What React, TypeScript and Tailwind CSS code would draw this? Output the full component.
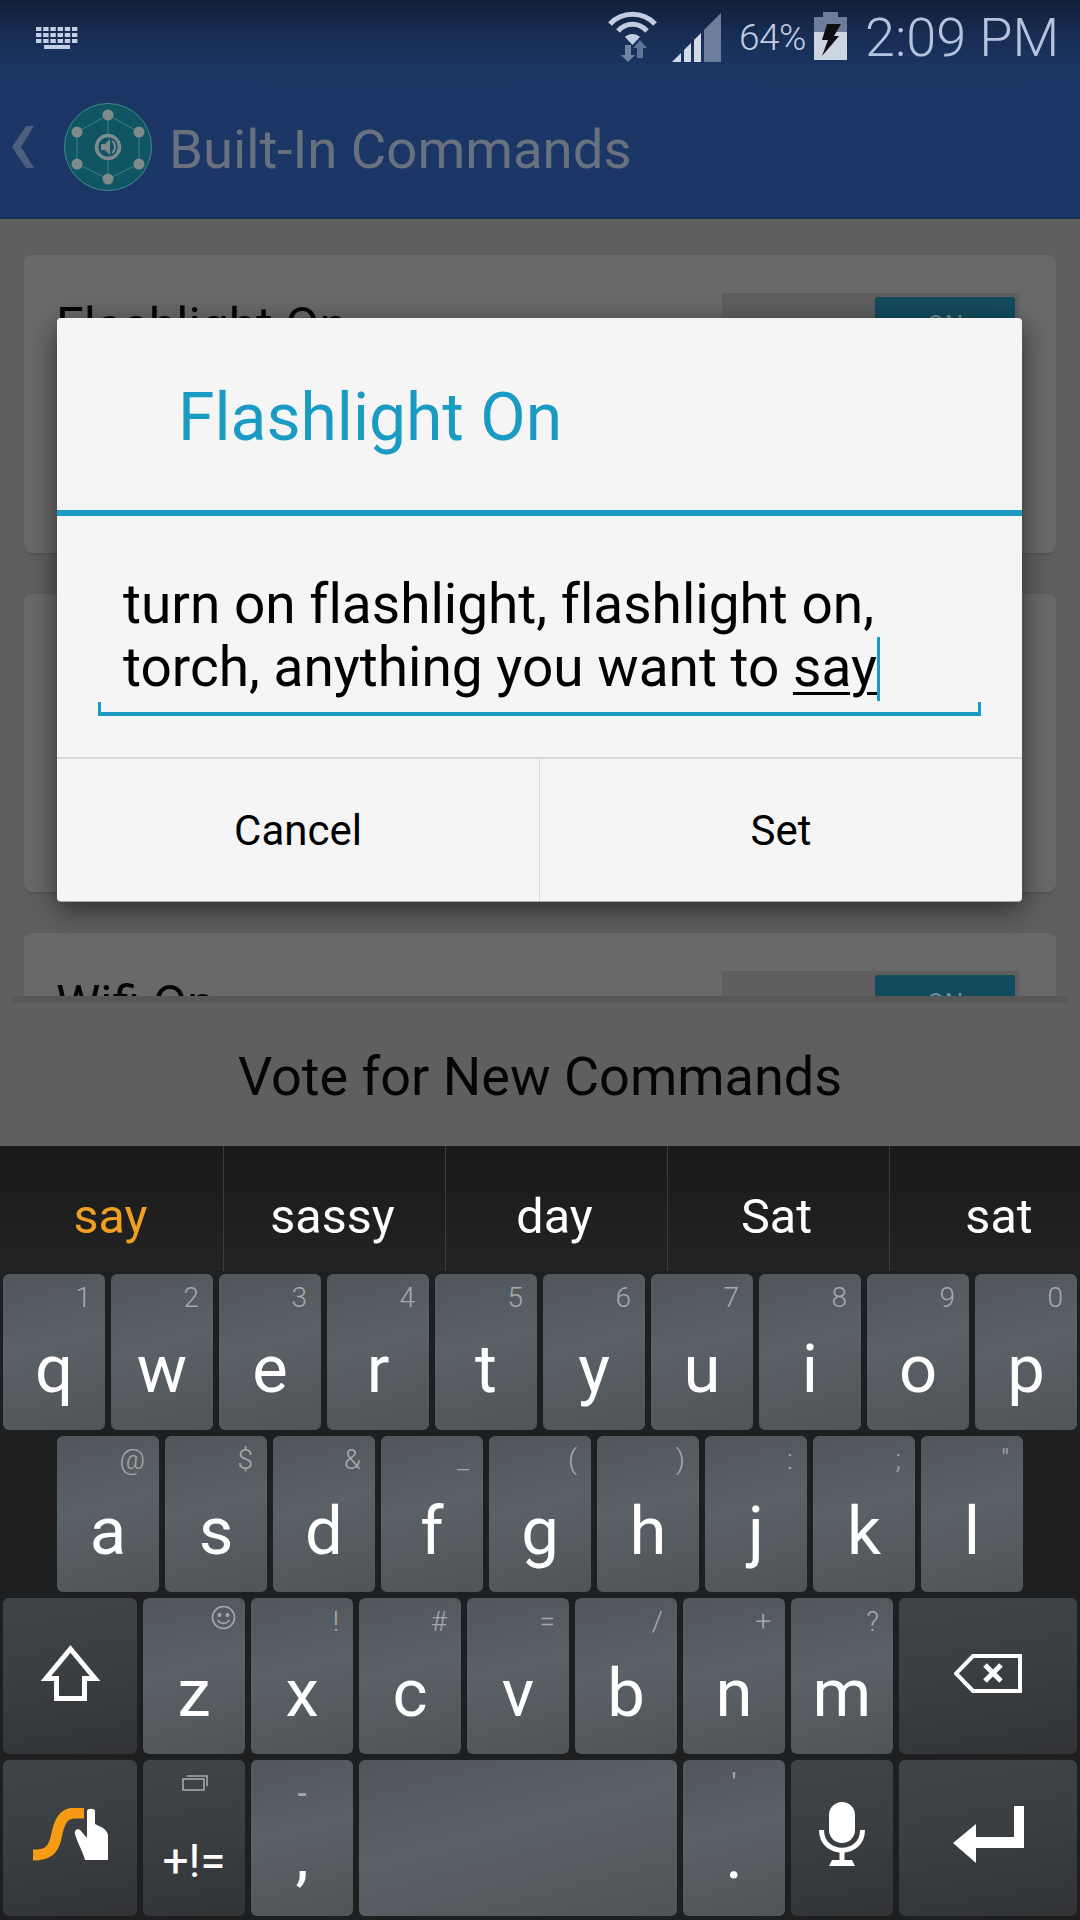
const digits = ["1", "2", "3", "4", "5", "6", "7", "8", "9", "0"];
const row1 = ["q", "w", "e", "r", "t", "y", "u", "i", "o", "p"];
const row2 = [
  { label: "a", hint: "@" },
  { label: "s", hint: "$" },
  { label: "d", hint: "&" },
  { label: "f", hint: "_" },
  { label: "g", hint: "(" },
  { label: "h", hint: ")" },
  { label: "j", hint: ":" },
  { label: "k", hint: ";" },
  { label: "l", hint: '"' },
];
const row3 = [
  { label: "x", hint: "!" },
  { label: "c", hint: "#" },
  { label: "v", hint: "=" },
  { label: "b", hint: "/" },
  { label: "n", hint: "+" },
  { label: "m", hint: "?" },
];
const suggestions = ["say", "sassy", "day", "Sat", "sat"];

const lightKey =
  "relative h-[156px] shrink-0 rounded-[6px] bg-[linear-gradient(165deg,#50565b_0%,#5a6167_45%,#505457_100%)] text-white";
const darkKey =
  "relative h-[156px] shrink-0 rounded-[6px] bg-[linear-gradient(170deg,#404448_0%,#3b3e41_50%,#313335_100%)] text-white flex items-center justify-center";
const keyLetter = "absolute inset-x-0 top-[60px] text-center text-[67px] leading-[70px]";

function LetterKey({ label, hint }: { label: string; hint?: string }) {
  return (
    <div className={`${lightKey} w-[102px]`}>
      {hint && (
        <span className="absolute right-[14px] top-[8px] text-[28px] leading-[32px] font-light text-[#a5a9ad]">
          {hint}
        </span>
      )}
      <span className={keyLetter}>{label}</span>
    </div>
  );
}

function Card({ title }: { title?: string }) {
  return (
    <div className="flex h-[298px] shrink-0 items-start justify-between rounded-[8px] bg-[#696969] pl-[32px] pr-[37px] pt-[38px] shadow-[0_2px_0_#565656]">
      {title && <span className="pt-[5px] text-[50px] leading-[56px] text-[#050505]">{title}</span>}
      {title && (
        <div className="h-[80px] w-[297px] bg-[#5f5f5f] p-[4px] pl-[153px]">
          <div className="flex h-full items-start justify-center rounded-[3px] bg-[#134b5e] pt-[9px] text-[26px] text-[#6f8d97]">
            ON
          </div>
        </div>
      )}
    </div>
  );
}

function WifiIcon() {
  return (
    <svg width="49" height="52" viewBox="0 0 49 52" fill="none">
      <path d="M2 14 C14 1 35 1 47 14" stroke="#c3cde0" strokeWidth="5" />
      <path d="M10 21 C18 12 31 12 39 21" stroke="#c3cde0" strokeWidth="5" />
      <path d="M17 27 C21 23 28 23 32 27 L24.5 35 Z" fill="#c3cde0" />
      <path d="M17 35 H23 V45 H27 L20 52 L13 45 H17 Z" fill="#6f82a0" />
      <path d="M32 30 L39 38 H35 V48 H29 V38 H25 Z" fill="#5f7596" />
    </svg>
  );
}

function SignalIcon() {
  return (
    <svg width="49" height="49" viewBox="0 0 49 49">
      <path d="M49 0 V49 H32 V17 Z" fill="#6a7d9b" />
      <path d="M29 20 V49 H22 V27 Z" fill="#d3dae6" />
      <path d="M19 30 V49 H12 V37 Z" fill="#d3dae6" />
      <path d="M9 40 V49 H0 Z" fill="#d3dae6" />
    </svg>
  );
}

function BatteryIcon() {
  return (
    <svg width="33" height="48" viewBox="0 0 33 48">
      <path d="M9 0 H24 V5 H33 V20 H0 V5 H9 Z" fill="#6a7d9b" />
      <rect x="0" y="20" width="33" height="28" fill="#cdd5e3" />
      <path d="M13 12 H27 L20 24 H25 L8 44 L14 28 H8 Z" fill="#0d0f14" />
    </svg>
  );
}

function KeyboardIcon() {
  const rows = [0, 6, 12];
  const cols = [0, 7.2, 14.4, 21.6, 28.8, 36];
  return (
    <svg width="42" height="22" viewBox="0 0 42 22" fill="#c3cfe4">
      {rows.map((y) => cols.map((x) => <rect key={`${x}-${y}`} x={x} y={y} width="5.4" height="4" />))}
      <rect x="8" y="18" width="26" height="4" />
    </svg>
  );
}

function AppLogo() {
  const dots = [
    [44, 12],
    [75, 29],
    [75, 61],
    [44, 76],
    [13, 61],
    [13, 29],
  ];
  return (
    <svg width="88" height="88" viewBox="0 0 88 88" fill="none">
      <circle cx="44" cy="44" r="43.5" fill="#0f5562" stroke="#3f8c8b" />
      <path d="M44 12 L75 29 V61 L44 76 L13 61 V29 Z" stroke="#3f8283" strokeWidth="1" />
      <path d="M44 12 V32 M44 56 V76" stroke="#3f8283" strokeWidth="1" />
      {dots.map(([x, y]) => (
        <circle key={`${x}-${y}`} cx={x} cy={y} r="5.5" fill="#7f8a8c" />
      ))}
      <circle cx="44" cy="44" r="11.5" fill="#0f5562" stroke="#7f8a8c" strokeWidth="3.5" />
      <path d="M37 41 H41 L46 36 V52 L41 47 H37 Z" fill="#7f8a8c" />
      <path d="M48 38 C52 41 52 47 48 50" stroke="#7f8a8c" strokeWidth="2" />
    </svg>
  );
}

function SmileIcon() {
  return (
    <svg width="25" height="25" viewBox="0 0 25 25" fill="none" stroke="#a5a9ad" strokeWidth="1.6">
      <circle cx="12.5" cy="12.5" r="11" />
      <circle cx="8.5" cy="10" r="1.2" fill="#a5a9ad" />
      <circle cx="16.5" cy="10" r="1.2" fill="#a5a9ad" />
      <path d="M7 15 C9 19.5 16 19.5 18 15" />
    </svg>
  );
}

function ShiftIcon() {
  return (
    <svg width="63" height="56" viewBox="0 0 63 56" fill="none">
      <path d="M31.5 4 L56 33.5 H45.5 V53.5 H17.5 V33.5 H7 Z" stroke="#fff" strokeWidth="5" />
    </svg>
  );
}

function BackspaceIcon() {
  return (
    <svg width="68" height="39" viewBox="0 0 68 39" fill="none">
      <path d="M66 2 H19 L2 19.5 L19 37 H66 Z" stroke="#fff" strokeWidth="4" />
      <path d="M31 11 L47 27 M47 11 L31 27" stroke="#fff" strokeWidth="5" />
    </svg>
  );
}

function MicIcon() {
  return (
    <svg width="46" height="64" viewBox="0 0 46 64" fill="none">
      <rect x="10" y="0" width="26" height="41" rx="13" fill="#fff" />
      <path d="M2.5 28 C2.5 55 43.5 55 43.5 28" stroke="#fff" strokeWidth="5" />
      <path d="M20.5 48 H25.5 V58 H33 L36 64 H10 L13 58 H20.5 Z" fill="#fff" />
    </svg>
  );
}

function EnterIcon() {
  return (
    <svg width="71" height="57" viewBox="0 0 71 57" fill="#fff">
      <path d="M61 0 H71 V42 H23 V57 L0 37 L23 18 V31 H61 Z" />
    </svg>
  );
}

function SwypeIcon() {
  return (
    <svg width="75" height="53" viewBox="0 0 75 53" fill="none">
      <path d="M0 47 C14 47 20 43 23 30 C26 14 30 5 42 5 H51" stroke="#f59c13" strokeWidth="11" />
      <path
        d="M54 3 C54 0 62 0 62 3 V16 L70 20 C73 22 75 25 75 28 V52 H52 C50 44 44 34 42 26 C41 21 46 20 48 23 L54 30 Z"
        fill="#fff"
      />
    </svg>
  );
}

function WindowsIcon() {
  return (
    <svg width="26" height="17" viewBox="0 0 26 17" fill="none" stroke="#a5a9ad" strokeWidth="1.6">
      <rect x="1" y="5" width="21" height="11" />
      <path d="M5 2 H25 V12" />
    </svg>
  );
}

export default function App() {
  return (
    <div className="flex h-[1920px] w-[1080px] flex-col overflow-hidden bg-[#5f5f5f] font-['Roboto',sans-serif]">
      {/* Status bar + action bar */}
      <header className="h-[219px] shrink-0 bg-[linear-gradient(180deg,#111f3a_0px,#172d54_35px,#1b3665_70px,#1c3767_100%)] shadow-[inset_0_-2px_0_#19315a]">
        <div className="flex h-[75px] items-center pl-[36px] pr-[25px]">
          <KeyboardIcon />
          <div className="ml-auto flex items-center">
            <div className="mt-[-3px]"><WifiIcon /></div>
            <div className="ml-[15px] mt-[-1px]"><SignalIcon /></div>
            <span className="ml-[18px] w-[66px] text-[37px] leading-[40px] font-light tracking-[-0.5px] text-[#c3cde0]">
              64%
            </span>
            <div className="ml-[9px] mt-[-3px]"><BatteryIcon /></div>
            <span className="ml-[18px] w-[190px] whitespace-nowrap text-[54px] leading-[60px] font-light text-[#b5c3dd]">
              2:09 PM
            </span>
          </div>
        </div>
        <div className="flex h-[144px] items-start pl-[12px] pt-[28px]">
          <svg width="22" height="42" viewBox="0 0 22 42" className="mt-[23px]" fill="#4d5f7e">
            <path d="M14 0 H22 L9 21 L22 42 H14 L0 21 Z" />
          </svg>
          <div className="ml-[30px]"><AppLogo /></div>
          <span className="ml-[17px] mt-[16px] text-[54.5px] leading-[60px] text-[#69717f]">
            Built-In Commands
          </span>
        </div>
      </header>

      {/* Scrolling command list */}
      <main className="flex h-[777px] shrink-0 flex-col gap-[41px] overflow-hidden px-[24px] pt-[36px]">
        <Card title="Flashlight On" />
        <Card />
        <Card title="Wifi On" />
      </main>

      {/* Footer button */}
      <div className="mx-[12px] h-[6px] shrink-0 bg-[#575757]" />
      <div className="flex h-[144px] shrink-0 items-center justify-center pt-[4px] text-[54px] text-[#050505]">
        Vote for New Commands
      </div>

      {/* Keyboard */}
      <section className="flex flex-1 flex-col overflow-hidden bg-[#1d1f20]">
        <div className="flex h-[125px] bg-[linear-gradient(180deg,#1a1a1a,#232323)]">
          {suggestions.map((word, i) => (
            <div
              key={word}
              className={`flex h-full shrink-0 items-center justify-center pt-[18px] text-[48.5px] ${
                i === 0 ? "w-[224px] pr-[2px] text-[#f0a020]" : "w-[222px] pr-[4px] text-white"
              } ${i < 4 ? "border-r border-[#3c3c3c]" : ""}`}
            >
              {word}
            </div>
          ))}
        </div>
        <div className="flex flex-col gap-[6px] px-[3px] pt-[3px]">
          <div className="flex gap-[6px]">
            {row1.map((letter, i) => (
              <LetterKey key={letter} label={letter} hint={digits[i]} />
            ))}
          </div>
          <div className="flex gap-[6px] pl-[54px]">
            {row2.map((k) => (
              <LetterKey key={k.label} label={k.label} hint={k.hint} />
            ))}
          </div>
          <div className="flex gap-[6px]">
            <div className={`${darkKey} w-[134px] pb-[6px]`}><ShiftIcon /></div>
            <div className={`${lightKey} w-[102px]`}>
              <span className="absolute right-[9px] top-[7px]"><SmileIcon /></span>
              <span className={keyLetter}>z</span>
            </div>
            {row3.map((k) => (
              <LetterKey key={k.label} label={k.label} hint={k.hint} />
            ))}
            <div className={`${darkKey} w-[178px] pb-[6px]`}><BackspaceIcon /></div>
          </div>
          <div className="flex gap-[6px]">
            <div className={`${darkKey} w-[134px] pb-[8px]`}><SwypeIcon /></div>
            <div className={`${darkKey} w-[102px]`}>
              <span className="absolute left-[39px] top-[14px]"><WindowsIcon /></span>
              <span className="absolute inset-x-0 top-[79px] text-center text-[46px] leading-[44px]">+!=</span>
            </div>
            <div className={`${lightKey} w-[102px]`}>
              <span className="absolute inset-x-0 top-[18px] text-center text-[30px] leading-[32px] font-medium text-[#a5a9ad]">-</span>
              <span className={keyLetter}>,</span>
            </div>
            <div className={`${lightKey} w-[318px]`} />
            <div className={`${lightKey} w-[102px]`}>
              <span className="absolute inset-x-0 top-[8px] text-center text-[28px] leading-[32px] text-[#a5a9ad]">'</span>
              <span className={keyLetter}>.</span>
            </div>
            <div className={`${darkKey} w-[102px] pb-[8px]`}><MicIcon /></div>
            <div className={`${darkKey} w-[178px] pb-[8px]`}><EnterIcon /></div>
          </div>
        </div>
      </section>

      {/* Dialog over the list */}
      <div className="absolute left-[57px] top-[318px] flex h-[583px] w-[965px] flex-col rounded-[4px] bg-[#f5f5f5] shadow-[0_1px_0_#a8a8a8,0_8px_28px_rgba(0,0,0,0.55)]">
        <div className="flex h-[192px] items-center pl-[121px] pt-[7px] text-[66px] text-[#1a9bc4]">
          Flashlight On
        </div>
        <div className="h-[6px] bg-[#1a9bc4]" />
        <div className="h-[241px] px-[41px] pt-[54px]">
          <div className="relative h-[146px] pl-[25px] pt-[3px] text-[55px] leading-[63px] text-black [font-variant-ligatures:none]">
            <div>turn on flashlight, flashlight on,</div>
            <div className="flex">
              <span className="whitespace-pre">torch, anything you want to </span>
              <span className="underline decoration-[3px] underline-offset-[6px]">say</span>
              <span className="mt-[1px] h-[64px] w-[3px] bg-[#1a9bc4]" />
            </div>
            <div className="absolute inset-x-0 bottom-0 h-[14px] border-x-[3px] border-b-[4px] border-[#1a9bc4]" />
          </div>
        </div>
        <div className="flex flex-1 border-t-2 border-[#d8d8d8] text-[42px] text-black">
          <div className="flex flex-1 items-center justify-center border-r border-[#d8d8d8]">Cancel</div>
          <div className="flex flex-1 items-center justify-center">Set</div>
        </div>
      </div>
    </div>
  );
}
